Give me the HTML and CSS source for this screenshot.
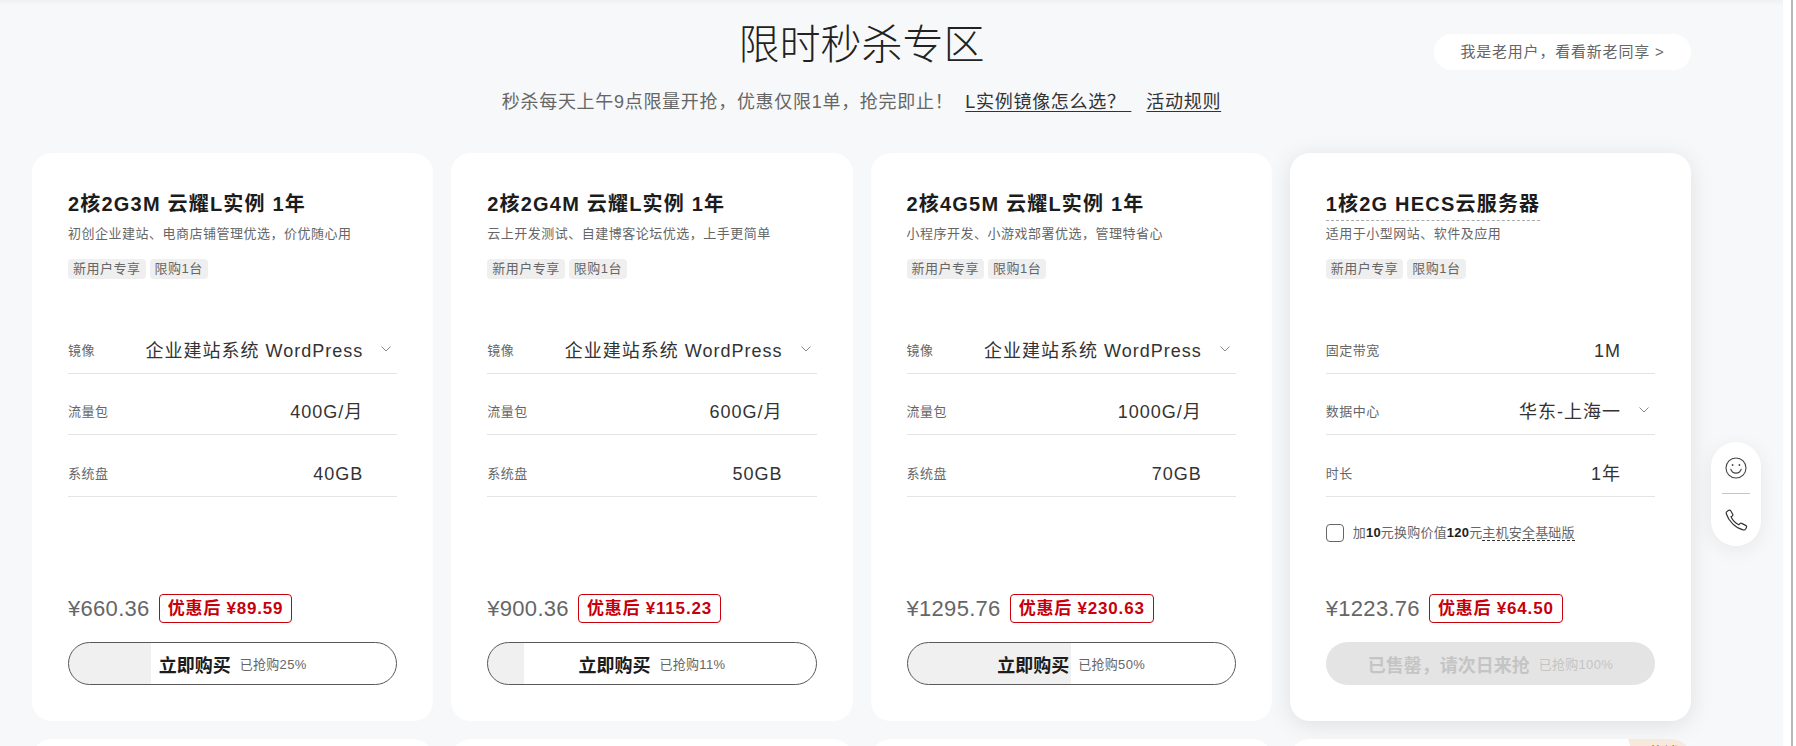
FILE: index.html
```html
<!DOCTYPE html>
<html lang="zh-CN">
<head>
    <meta charset="UTF-8">
    <meta name="viewport" content="width=device-width, initial-scale=1.0">
    <title>限时秒杀专区</title>
    <link rel="stylesheet" href="styles.css">
</head>
<body>
    <div class="page">
        <main class="main">
            <!-- Section header -->
            <header class="section-head">
                <h1>限时秒杀专区</h1>
                <a href="#" class="old-user">我是老用户&#65292;看看新老同享 &gt;</a>
            </header>
            <p class="subtitle">秒杀每天上午9点限量开抢&#65292;优惠仅限1单&#65292;抢完即止&#65281;<a href="#" class="rule-link first">L实例镜像怎么选&#65311;&nbsp;</a><a href="#" class="rule-link">活动规则</a></p>

            <div class="cards">
                <!-- Card 1 -->
                <section class="card">
                    <h2 class="card-title">2核2G3M 云耀L实例 1年</h2>
                    <p class="card-desc">初创企业建站、电商店铺管理优选&#65292;价优随心用</p>
                    <div class="tags"><span class="tag">新用户专享</span><span class="tag">限购1台</span></div>
                    <div class="rows">
                        <div class="row"><span class="row-label">镜像</span><span class="row-value">企业建站系统 WordPress</span><span class="row-arrow"><svg width="10" height="6" viewBox="0 0 10 6"><polyline points="0.5,0.5 5,5 9.5,0.5"/></svg></span></div>
                        <div class="row"><span class="row-label">流量包</span><span class="row-value">400G/月</span><span class="row-arrow"></span></div>
                        <div class="row"><span class="row-label">系统盘</span><span class="row-value">40GB</span><span class="row-arrow"></span></div>
                    </div>
                    <div class="price-line"><span class="price">¥660.36</span><span class="deal">优惠后 ¥89.59</span></div>
                    <a href="#" class="buy-btn" style="--sold: 25%"><b>立即购买</b><small>已抢购25%</small></a>
                </section>

                <!-- Card 2 -->
                <section class="card">
                    <h2 class="card-title">2核2G4M 云耀L实例 1年</h2>
                    <p class="card-desc">云上开发测试、自建博客论坛优选&#65292;上手更简单</p>
                    <div class="tags"><span class="tag">新用户专享</span><span class="tag">限购1台</span></div>
                    <div class="rows">
                        <div class="row"><span class="row-label">镜像</span><span class="row-value">企业建站系统 WordPress</span><span class="row-arrow"><svg width="10" height="6" viewBox="0 0 10 6"><polyline points="0.5,0.5 5,5 9.5,0.5"/></svg></span></div>
                        <div class="row"><span class="row-label">流量包</span><span class="row-value">600G/月</span><span class="row-arrow"></span></div>
                        <div class="row"><span class="row-label">系统盘</span><span class="row-value">50GB</span><span class="row-arrow"></span></div>
                    </div>
                    <div class="price-line"><span class="price">¥900.36</span><span class="deal">优惠后 ¥115.23</span></div>
                    <a href="#" class="buy-btn" style="--sold: 11%"><b>立即购买</b><small>已抢购11%</small></a>
                </section>

                <!-- Card 3 -->
                <section class="card">
                    <h2 class="card-title">2核4G5M 云耀L实例 1年</h2>
                    <p class="card-desc">小程序开发、小游戏部署优选&#65292;管理特省心</p>
                    <div class="tags"><span class="tag">新用户专享</span><span class="tag">限购1台</span></div>
                    <div class="rows">
                        <div class="row"><span class="row-label">镜像</span><span class="row-value">企业建站系统 WordPress</span><span class="row-arrow"><svg width="10" height="6" viewBox="0 0 10 6"><polyline points="0.5,0.5 5,5 9.5,0.5"/></svg></span></div>
                        <div class="row"><span class="row-label">流量包</span><span class="row-value">1000G/月</span><span class="row-arrow"></span></div>
                        <div class="row"><span class="row-label">系统盘</span><span class="row-value">70GB</span><span class="row-arrow"></span></div>
                    </div>
                    <div class="price-line"><span class="price">¥1295.76</span><span class="deal">优惠后 ¥230.63</span></div>
                    <a href="#" class="buy-btn" style="--sold: 50%"><b>立即购买</b><small>已抢购50%</small></a>
                </section>

                <!-- Card 4, sold out -->
                <section class="card card-active">
                    <h2 class="card-title dashed">1核2G HECS云服务器</h2>
                    <p class="card-desc">适用于小型网站、软件及应用</p>
                    <div class="tags"><span class="tag">新用户专享</span><span class="tag">限购1台</span></div>
                    <div class="rows">
                        <div class="row"><span class="row-label">固定带宽</span><span class="row-value">1M</span><span class="row-arrow"></span></div>
                        <div class="row"><span class="row-label">数据中心</span><span class="row-value">华东-上海一</span><span class="row-arrow"><svg width="10" height="6" viewBox="0 0 10 6"><polyline points="0.5,0.5 5,5 9.5,0.5"/></svg></span></div>
                        <div class="row"><span class="row-label">时长</span><span class="row-value">1年</span><span class="row-arrow"></span></div>
                    </div>
                    <label class="addon"><span class="check"></span><span>加<b>10</b>元换购价值<b>120</b>元<span class="addon-link">主机安全基础版</span></span></label>
                    <div class="price-line"><span class="price">¥1223.76</span><span class="deal">优惠后 ¥64.50</span></div>
                    <a href="#" class="buy-btn sold-out"><b>已售罄&#65292;请次日来抢</b><small>已抢购100%</small></a>
                </section>

                <!-- Next row, cut off by the window -->
                <section class="card"></section>
                <section class="card"></section>
                <section class="card"></section>
                <section class="card card-ribbon"><span class="ribbon">热销</span></section>
            </div>
        </main>
        <div class="scroll-edge"></div>
    </div>

    <!-- Floating contact widget -->
    <div class="float-bar">
        <a href="#" class="float-item">
            <svg width="24" height="24" viewBox="0 0 24 24" fill="none" stroke="#444" stroke-width="1.1" stroke-linecap="round">
                <circle cx="12" cy="12" r="10"/>
                <path d="M6.8 13.2c.9 2.600 2.800 3.900 5.200 3.900s4.300-1.300 5.200-3.900"/>
                <circle cx="8.600" cy="9" r=".9" fill="#444" stroke="none"/>
                <circle cx="15.400" cy="9" r=".9" fill="#444" stroke="none"/>
            </svg>
        </a>
        <a href="#" class="float-item">
            <svg width="24" height="24" viewBox="0 0 24 24" fill="none" stroke="#333" stroke-width="1.2" stroke-linejoin="round">
                <path d="M22.500 19.200l-.7 1.500c-.5 1-1.600 1.500-2.700 1.200C11.500 20 4.500 13 2.300 5.800c-.3-1 .1-2.100 1-2.600l1.500-.9c.7-.4 1.500-.2 1.900.5l2 3.400c.4.600.2 1.400-.4 1.800L7 8.800c1.500 3.300 4.300 6.200 7.800 8l1.100-1.200c.5-.5 1.300-.6 1.900-.2l4.200 2.200c.6.300.8 1 .5 1.600z"/>
            </svg>
        </a>
    </div>
</body>
</html>
```

FILE: styles.css
```css
html, body {
    margin: 0;
    padding: 0;
    height: 746px;
    overflow: hidden;
    background-color: white;
    font-family: "Liberation Sans", "Noto Sans CJK SC", sans-serif;
    color: #333;
}
a {
    color: inherit;
    text-decoration: none;
}
.page {
    display: flex;
    height: 746px;
    overflow: hidden;
}
.main {
    width: 1783px;
    flex: none;
    box-sizing: border-box;
    padding: 19px 92px 0 32px;
    background: linear-gradient(#f1f1f2, #f7f8fa 6px);
}
.scroll-edge {
    width: 10px;
    box-sizing: border-box;
    border-right: 2px solid #b8b8b8;
}

/* Header */
.section-head {
    display: grid;
    grid-template-columns: 1fr auto 1fr;
    align-items: center;
    height: 52px;
}
.section-head h1 {
    grid-column: 2;
    margin: 0;
    font-size: 41px;
    line-height: 52px;
    font-weight: 300;
    color: #222;
}
.old-user {
    justify-self: end;
    display: block;
    box-sizing: border-box;
    width: 257px;
    height: 36px;
    margin-top: 14px;
    line-height: 36px;
    text-align: center;
    font-size: 15px;
    letter-spacing: 0.8px;
    color: #666;
    background-color: white;
    border-radius: 18px;
}
.subtitle {
    margin: 17px 0 0;
    height: 30px;
    line-height: 28px;
    text-align: center;
    font-size: 18px;
    letter-spacing: 0.7px;
    color: #666;
}
.rule-link {
    margin-left: 15px;
    color: #333;
    text-decoration: underline;
    text-underline-offset: 3px;
}
.rule-link.first {
    margin-left: 12px;
}

/* Cards */
.cards {
    display: grid;
    grid-template-columns: repeat(4, 1fr);
    gap: 18px;
    margin-top: 35px;
}
.card {
    display: flex;
    flex-direction: column;
    align-items: flex-start;
    box-sizing: border-box;
    height: 568px;
    padding: 37px 36px 36px;
    background-color: white;
    border-radius: 20px;
}
.card-active {
    box-shadow: 0 4px 24px rgba(0,0,0,0.1);
}
.card-title {
    margin: 0;
    height: 30px;
    line-height: 28px;
    font-size: 20px;
    font-weight: bold;
    letter-spacing: 1.2px;
    color: #1c1c1c;
    border-bottom: 1px dashed transparent;
}
.card-title.dashed {
    border-bottom-color: #aaa;
}
.card-desc {
    margin: 0;
    line-height: 26px;
    font-size: 13px;
    letter-spacing: 0.5px;
    color: #666;
}
.tags {
    display: flex;
    gap: 4px;
    margin-top: 12px;
}
.tag {
    padding: 0 5px;
    line-height: 20px;
    font-size: 13px;
    letter-spacing: 0.5px;
    color: #666;
    background-color: #efefef;
    border-radius: 4px;
}
.rows {
    width: 100%;
    margin-top: 33px;
}
.row {
    display: flex;
    align-items: flex-end;
    box-sizing: border-box;
    height: 61.67px;
    padding-bottom: 8px;
    border-bottom: 1px solid #e4e4e4;
}
.row-label {
    line-height: 28px;
    font-size: 13px;
    letter-spacing: 0.5px;
    color: #666;
}
.row-value {
    margin-left: auto;
    line-height: 28px;
    font-size: 18px;
    letter-spacing: 1px;
    color: #333;
}
.row-arrow {
    display: flex;
    justify-content: flex-end;
    width: 34px;
    padding-right: 6px;
    box-sizing: border-box;
    height: 19px;
}
.row-arrow svg {
    fill: none;
    stroke: #888;
    stroke-width: 1;
}

/* Add-on checkbox on the last card */
.addon {
    display: flex;
    align-items: center;
    gap: 9px;
    margin-top: 27px;
    font-size: 13px;
    line-height: 18px;
    letter-spacing: 0.2px;
    color: #666;
}
.addon b {
    color: #222;
}
.check {
    width: 18px;
    height: 18px;
    box-sizing: border-box;
    border: 1px solid #666;
    border-radius: 4px;
}
.addon-link {
    border-bottom: 1px dashed #333;
}

/* Price and buy button */
.price-line {
    display: flex;
    align-items: center;
    gap: 9px;
    height: 29px;
    margin-top: auto;
}
.price {
    font-size: 22px;
    letter-spacing: 0.3px;
    color: #666;
}
.deal {
    box-sizing: border-box;
    height: 29px;
    padding: 0 8px;
    line-height: 27px;
    font-size: 17px;
    font-weight: bold;
    letter-spacing: 0.8px;
    color: #c7000b;
    border: 1px solid #c7000b;
    border-radius: 4px;
}
.buy-btn {
    display: flex;
    align-items: center;
    justify-content: center;
    gap: 9px;
    box-sizing: border-box;
    width: 100%;
    height: 43px;
    margin-top: 19px;
    border: 1px solid #595959;
    border-radius: 22px;
    background: linear-gradient(to right, #f0f0f0 var(--sold), white 0);
    color: #1c1c1c;
}
.buy-btn b {
    font-size: 18px;
}
.buy-btn small {
    font-size: 13px;
    letter-spacing: 0.3px;
    color: #666;
}
.buy-btn.sold-out {
    border: none;
    background: #e4e4e4;
    color: #c4c4c4;
}
.buy-btn.sold-out small {
    color: #c4c4c4;
}

/* Corner label on the next row */
.card-ribbon {
    position: relative;
    overflow: hidden;
}
.ribbon {
    position: absolute;
    top: 0;
    right: 0;
    box-sizing: border-box;
    width: 63px;
    height: 24px;
    padding-left: 8px;
    line-height: 27px;
    text-align: center;
    font-size: 14px;
    color: #7a5a3c;
    background-color: #f7e9dc;
    clip-path: polygon(0 0, 100% 0, 100% 100%, 12% 100%);
}

/* Floating widget */
.float-bar {
    position: fixed;
    top: 442px;
    left: 1711px;
    width: 50px;
    height: 104px;
    box-sizing: border-box;
    display: flex;
    flex-direction: column;
    background-color: white;
    border-radius: 25px;
    box-shadow: 0 4px 20px rgba(0,0,0,0.07);
}
.float-item {
    display: flex;
    align-items: center;
    justify-content: center;
    height: 52px;
}
.float-item:first-child {
    position: relative;
}
.float-item:first-child::after {
    content: "";
    position: absolute;
    left: 11px;
    right: 11px;
    bottom: 0;
    border-bottom: 1px solid #c4c4c4;
}
```
